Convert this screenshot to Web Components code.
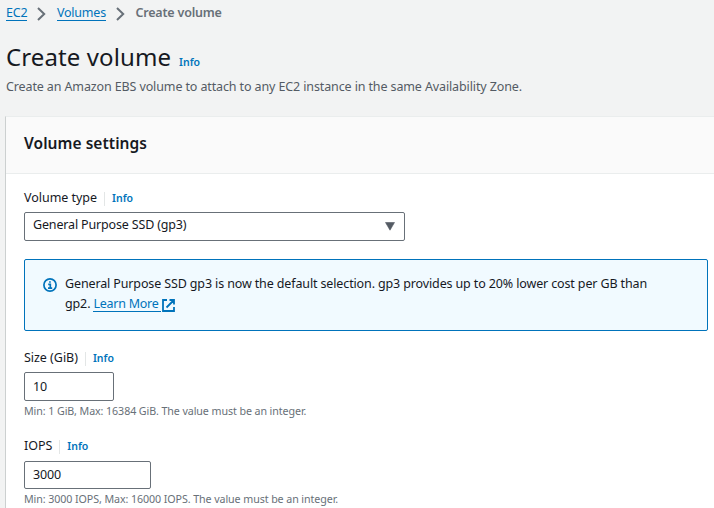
<!DOCTYPE html>
<html lang="en">
<head>
<meta charset="utf-8">
<title>Create volume</title>
<style>
html, body { margin: 0; height: 508px; overflow: hidden; background: #f2f3f3; }
body { font: 12.5px/20px "Noto Sans", sans-serif; letter-spacing: -0.13px; color: #16191f; }
</style>
</head>
<body>
<create-volume-page></create-volume-page>
<script>
const define = (name, html) => {
  const tpl = document.createElement('template');
  tpl.innerHTML = html;
  customElements.define(name, class extends HTMLElement {
    constructor() {
      super();
      this.attachShadow({ mode: 'open' }).append(tpl.content.cloneNode(true));
    }
  });
};

define('info-link', `
<style>
:host { display: inline-block; font-size: 10.5px; font-weight: 600; letter-spacing: 0; color: #0073bb; }
</style><slot>Info</slot>`);

define('crumb-trail', `
<style>
:host { display: flex; align-items: flex-start; height: 20px; letter-spacing: -0.2px; }
::slotted(a) { color: #0073bb; height: 17px; border-bottom: 1px solid #0073bb; }
::slotted(b) { color: #687078; font-weight: 600; }
::slotted(svg) { margin: 4px 10.5px 0 10px; flex: none; }
</style><slot></slot>`);

define('page-heading', `
<style>
:host { display: block; }
.row { display: flex; align-items: baseline; gap: 8px; height: 30px; }
h1 { margin: 0; font-size: 24px; line-height: 30px; font-weight: 400; letter-spacing: 0.1px; }
p { margin: 5px 0 0; color: #545b64; letter-spacing: -0.12px; }
</style>
<div class="row"><h1><slot></slot></h1><info-link></info-link></div>
<p><slot name="description"></slot></p>`);

define('settings-panel', `
<style>
:host { display: block; background: #fff; border-top: 1px solid #eaeded; border-left: 1px solid #ccd0d0; }
header { box-sizing: border-box; height: 57px; padding: 14px 18px 0; background: #fafafa; border-bottom: 1px solid #eaeded; }
h2 { margin: 0; font-size: 15.5px; line-height: 24px; font-weight: 600; letter-spacing: 0.05px; }
.body { padding: 14px 6px 0 18px; }
</style>
<header><h2><slot name="title"></slot></h2></header>
<div class="body"><slot></slot></div>`);

define('form-field', `
<style>
:host { display: block; }
.label { display: flex; align-items: baseline; height: 20px; letter-spacing: -0.03px; }
info-link { margin-left: 7px; padding-left: 8px; background: linear-gradient(#e3e6e6, #e3e6e6) 0 4px / 1px 14px no-repeat; }
.control { margin-top: 4px; }
.hint { font-size: 10.7px; line-height: 16px; letter-spacing: -0.09px; color: #687078; margin-top: 2px; }
</style>
<div class="label"><span><slot name="label"></slot></span><info-link></info-link></div>
<div class="control"><slot></slot></div>
<div class="hint"><slot name="hint"></slot></div>`);

define('text-box', `
<style>
:host { display: flex; justify-content: space-between; box-sizing: border-box; height: 29px; padding: 2px 8px 0; border: 1px solid #687078; border-radius: 2px; background: #fff; letter-spacing: -0.16px; }
</style><slot></slot>`);

define('info-alert', `
<style>
:host { display: flex; box-sizing: border-box; height: 72px; padding: 14px 20px 0 18px; border: 1px solid #0073bb; border-radius: 2px; background: #f1faff; letter-spacing: -0.13px; }
svg { flex: none; margin: 4px 8px 0 0; }
</style>
<svg width="14" height="14" viewBox="0 0 14 14" fill="none" stroke="#0073bb" stroke-width="1.7"><circle cx="7" cy="7" r="6.1"/><path d="M5.2 6.4H7.3V10M5 10.2H9.2M6.1 4h1.7"/></svg>
<div><slot></slot></div>`);

define('external-link', `
<style>
:host { display: inline-flex; align-items: flex-start; color: #0073bb; height: 20px; vertical-align: top; letter-spacing: -0.26px; }
span { border-bottom: 1px solid #0073bb; height: 17px; padding-right: 2px; }
svg { margin: 5px 0 0 1px; }
</style>
<span><slot></slot></span>
<svg width="13" height="13" viewBox="0 0 13 13" fill="none" stroke="#0073bb" stroke-width="1.8"><path d="M5 1H1V12H12V8M7.5 1H12V5.5M12 1L4.5 8.5"/></svg>`);

define('create-volume-page', `
<style>
:host { display: block; }
.top { box-sizing: border-box; padding: 3px 6px 0; height: 116px; }
page-heading { margin-top: 19px; }
settings-panel { margin-left: 5px; height: 391px; }
.type { width: 381px; }
.size { width: 90px; padding-top: 4px; }
.iops { width: 127px; height: 28px; margin-top: 5px; padding-top: 3px; }
info-alert { margin: 0 0 17px; }
.first { height: 71px; }
.second { height: 88px; }
.tri { margin: 7px 1px 0 0; }
</style>
<div class="top">
<crumb-trail><a>EC2</a><svg width="9" height="14" viewBox="0 0 9 14" fill="none" stroke="#687078" stroke-width="2"><path d="M1 1L7.2 7L1 13"/></svg><a>Volumes</a><svg width="9" height="14" viewBox="0 0 9 14" fill="none" stroke="#687078" stroke-width="2"><path d="M1 1L7.2 7L1 13"/></svg><b>Create volume</b></crumb-trail>
<page-heading>Create volume<span slot="description">Create an Amazon EBS volume to attach to any EC2 instance in the same Availability Zone.</span></page-heading>
</div>
<settings-panel>
<span slot="title">Volume settings</span>
<form-field class="first"><span slot="label">Volume type</span><text-box class="type"><span>General Purpose SSD (gp3)</span><svg class="tri" width="10" height="9" viewBox="0 0 10 9"><path d="M.5 .5H9.5L5 8.2Z" fill="#545b64" stroke="#545b64" stroke-width=".6" stroke-linejoin="round"/></svg></text-box></form-field>
<info-alert>General Purpose SSD gp3 is now the default selection. gp3 provides up to 20% lower cost per GB than<br>gp2. <external-link>Learn More</external-link></info-alert>
<form-field class="second"><span slot="label">Size (GiB)</span><text-box class="size">10</text-box><span slot="hint">Min: 1 GiB, Max: 16384 GiB. The value must be an integer.</span></form-field>
<form-field><span slot="label">IOPS</span><text-box class="iops">3000</text-box><span slot="hint">Min: 3000 IOPS, Max: 16000 IOPS. The value must be an integer.</span></form-field>
</settings-panel>`);
</script>
</body>
</html>
